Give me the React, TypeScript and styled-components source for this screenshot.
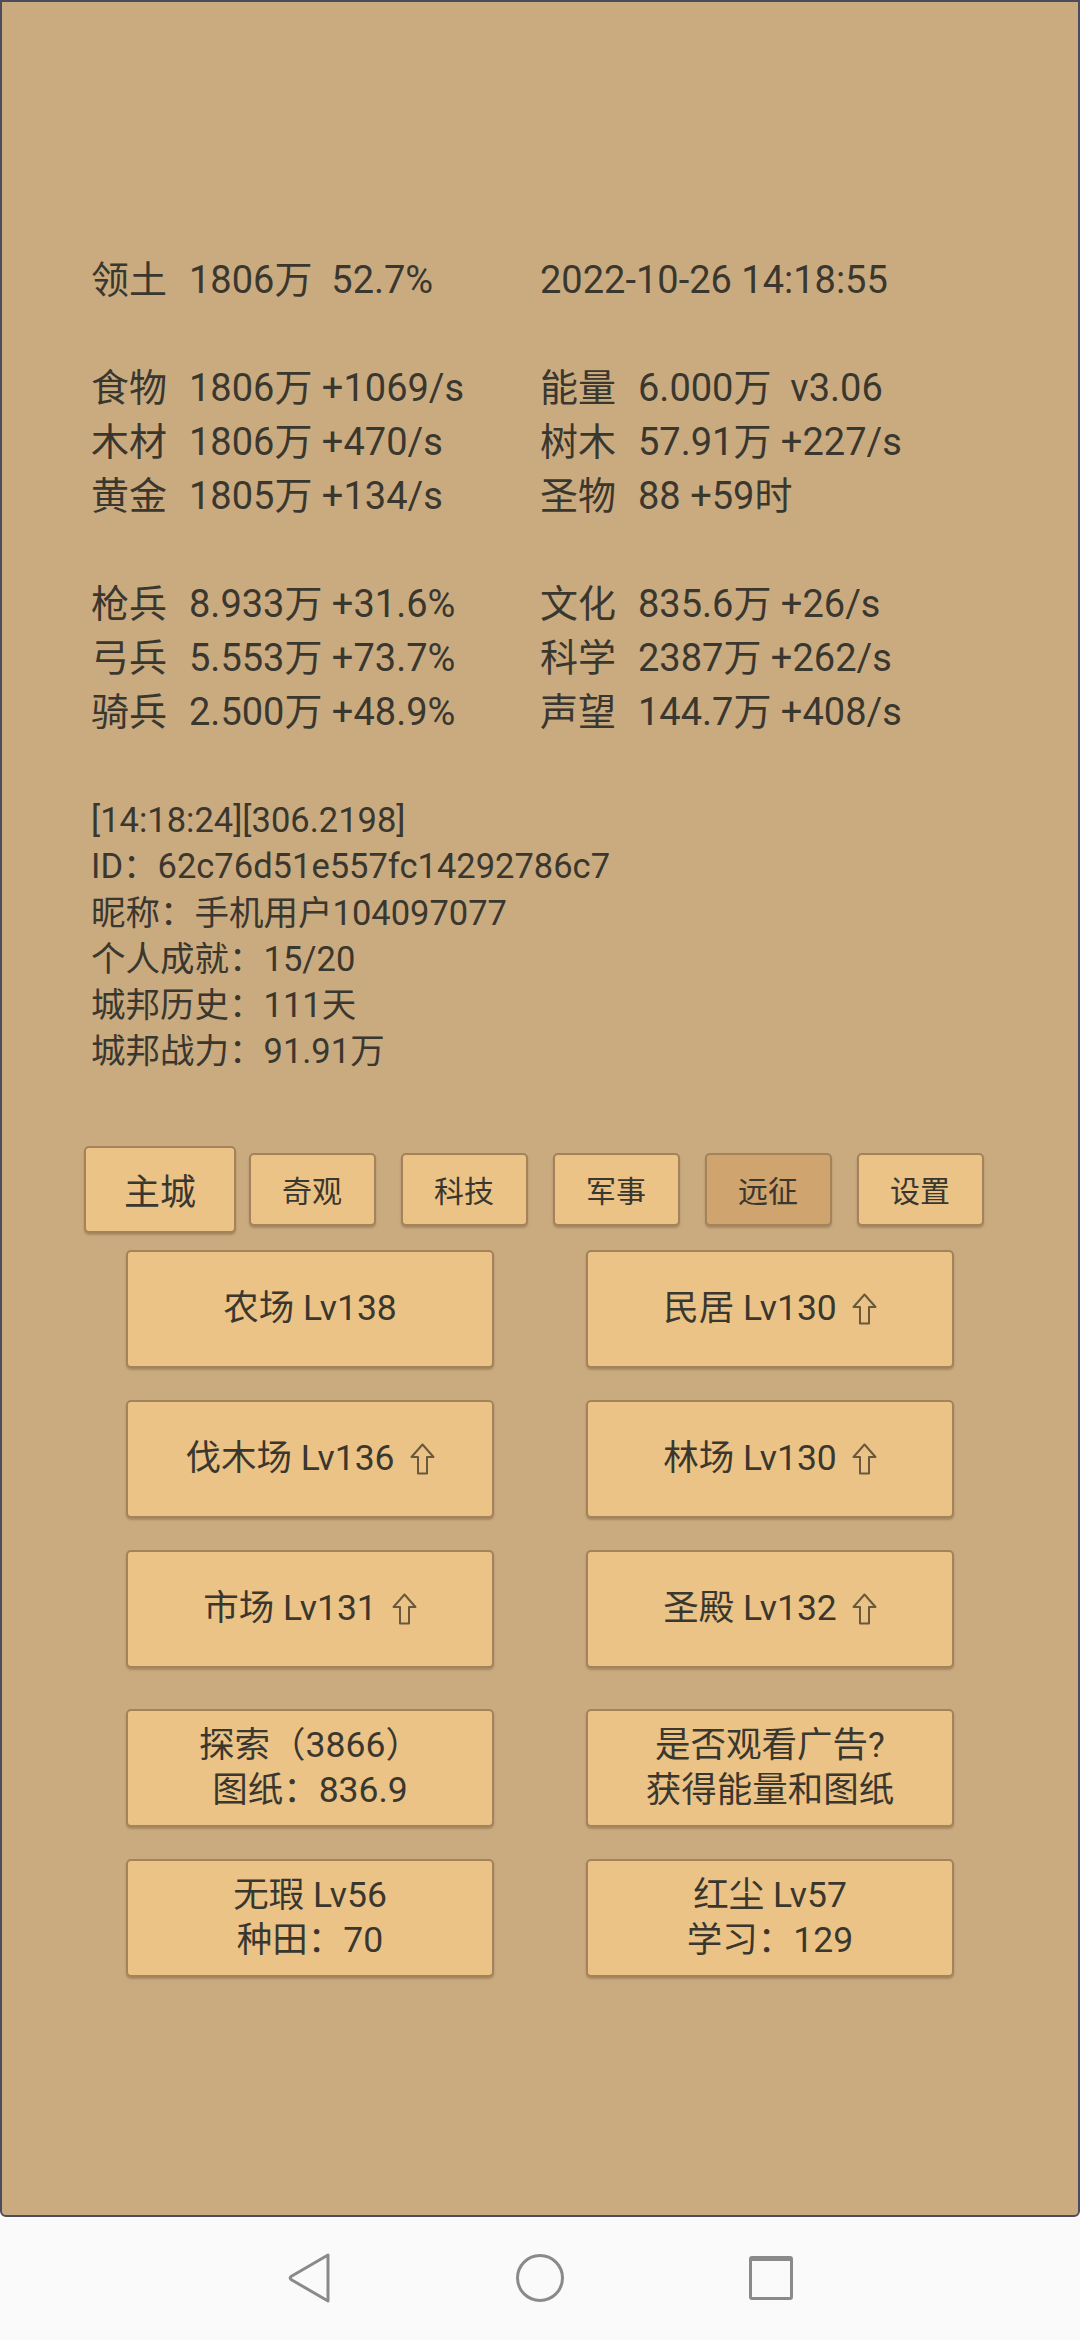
import React from 'react';
import styled, { createGlobalStyle } from 'styled-components';

const GlobalStyle = createGlobalStyle`
  html, body {
    margin: 0;
    padding: 0;
    background: #fafafa;
  }
  body {
    font-family: Roboto, "Noto Sans CJK SC", sans-serif;
  }
`;

interface StatItem {
  label: string;
  value: string;
}

const statGroups: StatItem[][][] = [
  [[{ label: '领土', value: '1806万  52.7%' }, { label: '', value: '2022-10-26 14:18:55' }]],
  [
    [{ label: '食物', value: '1806万 +1069/s' }, { label: '能量', value: '6.000万  v3.06' }],
    [{ label: '木材', value: '1806万 +470/s' }, { label: '树木', value: '57.91万 +227/s' }],
    [{ label: '黄金', value: '1805万 +134/s' }, { label: '圣物', value: '88 +59时' }],
  ],
  [
    [{ label: '枪兵', value: '8.933万 +31.6%' }, { label: '文化', value: '835.6万 +26/s' }],
    [{ label: '弓兵', value: '5.553万 +73.7%' }, { label: '科学', value: '2387万 +262/s' }],
    [{ label: '骑兵', value: '2.500万 +48.9%' }, { label: '声望', value: '144.7万 +408/s' }],
  ],
];

const infoLines: string[] = [
  '[14:18:24][306.2198]',
  'ID：62c76d51e557fc14292786c7',
  '昵称：手机用户104097077',
  '个人成就：15/20',
  '城邦历史：111天',
  '城邦战力：91.91万',
];

const tabs: string[] = ['主城', '奇观', '科技', '军事', '远征', '设置'];

interface Building {
  lines: string[];
  up?: boolean;
}

// rows of two; from the 4th row on there is a little more room above
const buildingRows: Building[][] = [
  [{ lines: ['农场 Lv138'] }, { lines: ['民居 Lv130'], up: true }],
  [{ lines: ['伐木场 Lv136'], up: true }, { lines: ['林场 Lv130'], up: true }],
  [{ lines: ['市场 Lv131'], up: true }, { lines: ['圣殿 Lv132'], up: true }],
  [{ lines: ['探索（3866）', '图纸：836.9'] }, { lines: ['是否观看广告?', '获得能量和图纸'] }],
  [{ lines: ['无瑕 Lv56', '种田：70'] }, { lines: ['红尘 Lv57', '学习：129'] }],
];

/**
 * styled components
 */
const Screen = styled.div`
  width: 1080px;
  height: 2340px;
  display: flex;
  flex-direction: column;
  overflow: hidden;
`;

const Panel = styled.div`
  box-sizing: border-box;
  height: 2217px;
  flex-shrink: 0;
  background: #caab80;
  border: 2px solid #4b4d5c;
  border-radius: 0 0 6px 6px;
  padding-top: 251px;
  color: #3a372f;
`;

const StatBlock = styled.div`
  padding-left: 89px;
`;

const StatGroup = styled.div`
  & + & {
    margin-top: 54px;
  }
`;

const StatRow = styled.div`
  display: grid;
  grid-template-columns: 98px 351px 98px 1fr;
  font-size: 38px;
  line-height: 54px;
  white-space: pre;
`;

const Label = styled.span``;

const Value = styled.span<{ $wide?: boolean }>`
  grid-column: ${({ $wide }) => ($wide ? 'span 2' : 'auto')};
`;

const InfoBlock = styled.div`
  margin-top: 58px;
  padding-left: 89px;
  font-size: 34.5px;
  line-height: 46.3px;
`;

const TabBar = styled.div`
  margin: 71px auto 0;
  width: 912px;
  height: 87px;
  display: grid;
  grid-template-columns: repeat(6, 1fr);
  align-items: center;
  justify-items: center;
`;

const Tab = styled.div<{ $active?: boolean; $pressed?: boolean }>`
  box-sizing: border-box;
  width: ${({ $active }) => ($active ? 152 : 127)}px;
  height: ${({ $active }) => ($active ? 87 : 73)}px;
  display: flex;
  align-items: center;
  justify-content: center;
  font-size: ${({ $active }) => ($active ? 36 : 30)}px;
  background: ${({ $pressed }) => ($pressed ? '#cfa46e' : '#ecc386')};
  border: 2px solid #a4835a;
  border-radius: 5px;
  box-shadow: 0 2px 2px rgba(90, 60, 25, 0.3);
`;

const ButtonGrid = styled.div`
  margin: 17px auto 0;
  width: 828px;
  display: grid;
  grid-template-columns: 368px 368px;
  column-gap: 92px;
  row-gap: 32px;
`;

const BuildingButton = styled.div<{ $extraTop?: boolean }>`
  box-sizing: border-box;
  height: 118px;
  margin-top: ${({ $extraTop }) => ($extraTop ? 9 : 0)}px;
  display: flex;
  flex-direction: column;
  align-items: center;
  justify-content: center;
  background: #ecc386;
  border: 2px solid #a4835a;
  border-radius: 5px;
  box-shadow: 0 2px 2px rgba(90, 60, 25, 0.3);
  font-size: 35.5px;
  line-height: 45px;
`;

const ButtonLine = styled.div`
  display: flex;
  align-items: center;
  white-space: pre;
`;

const UpArrow = styled.svg`
  margin-left: 15px;
  width: 25px;
  height: 32px;
`;

const NavBar = styled.div`
  flex: 1;
  background: #fafafa;
  display: flex;
  align-items: center;
  justify-content: center;
  gap: 183px;
  padding-bottom: 2px;
`;

const NavIcon = styled.svg`
  width: 48px;
  height: 50px;
`;

const Arrow = () => (
  <UpArrow viewBox="0 0 25 32">
    <path
      d="M12.5 1.5 L23.5 14 L17 14 L17 30.5 L8 30.5 L8 14 L1.5 14 Z"
      fill="none"
      stroke="#6a583c"
      strokeWidth="2"
      strokeLinejoin="round"
    />
  </UpArrow>
);

const App = () => {
  return (
    <>
      <GlobalStyle />
      <Screen>
        <Panel>
          <StatBlock>
            {statGroups.map((group, gi) => (
              <StatGroup key={gi}>
                {group.map((row, ri) => (
                  <StatRow key={ri}>
                    {row.map((item, ii) =>
                      item.label ? (
                        <React.Fragment key={ii}>
                          <Label>{item.label}</Label>
                          <Value>{item.value}</Value>
                        </React.Fragment>
                      ) : (
                        <Value key={ii} $wide>{item.value}</Value>
                      )
                    )}
                  </StatRow>
                ))}
              </StatGroup>
            ))}
          </StatBlock>

          <InfoBlock>
            {infoLines.map((line, i) => <div key={i}>{line}</div>)}
          </InfoBlock>

          <TabBar>
            {tabs.map((t, i) => (
              <Tab key={t} $active={i === 0} $pressed={t === '远征'}>{t}</Tab>
            ))}
          </TabBar>

          <ButtonGrid>
            {buildingRows.map((row, ri) =>
              row.map((b, bi) => (
                <BuildingButton key={`${ri}-${bi}`} $extraTop={ri === 3}>
                  {b.lines.map((line, li) => (
                    <ButtonLine key={li}>
                      {line}
                      {b.up && <Arrow />}
                    </ButtonLine>
                  ))}
                </BuildingButton>
              ))
            )}
          </ButtonGrid>
        </Panel>

        <NavBar>
          <NavIcon viewBox="0 0 48 50">
            <path d="M43 2 L43 48 L6 26.5 Q4.5 25 6 23.5 Z" fill="none" stroke="#8a8a8a" strokeWidth="3" strokeLinejoin="round" />
          </NavIcon>
          <NavIcon viewBox="0 0 48 50">
            <circle cx="24" cy="25" r="22.5" fill="none" stroke="#8a8a8a" strokeWidth="3" />
          </NavIcon>
          <NavIcon viewBox="0 0 48 50">
            <rect x="3.5" y="4.5" width="41" height="41" rx="1.5" fill="none" stroke="#8a8a8a" strokeWidth="3" />
            <rect x="3.5" y="4" width="41" height="4" fill="#8a8a8a" />
          </NavIcon>
        </NavBar>
      </Screen>
    </>
  );
};

export default App;
